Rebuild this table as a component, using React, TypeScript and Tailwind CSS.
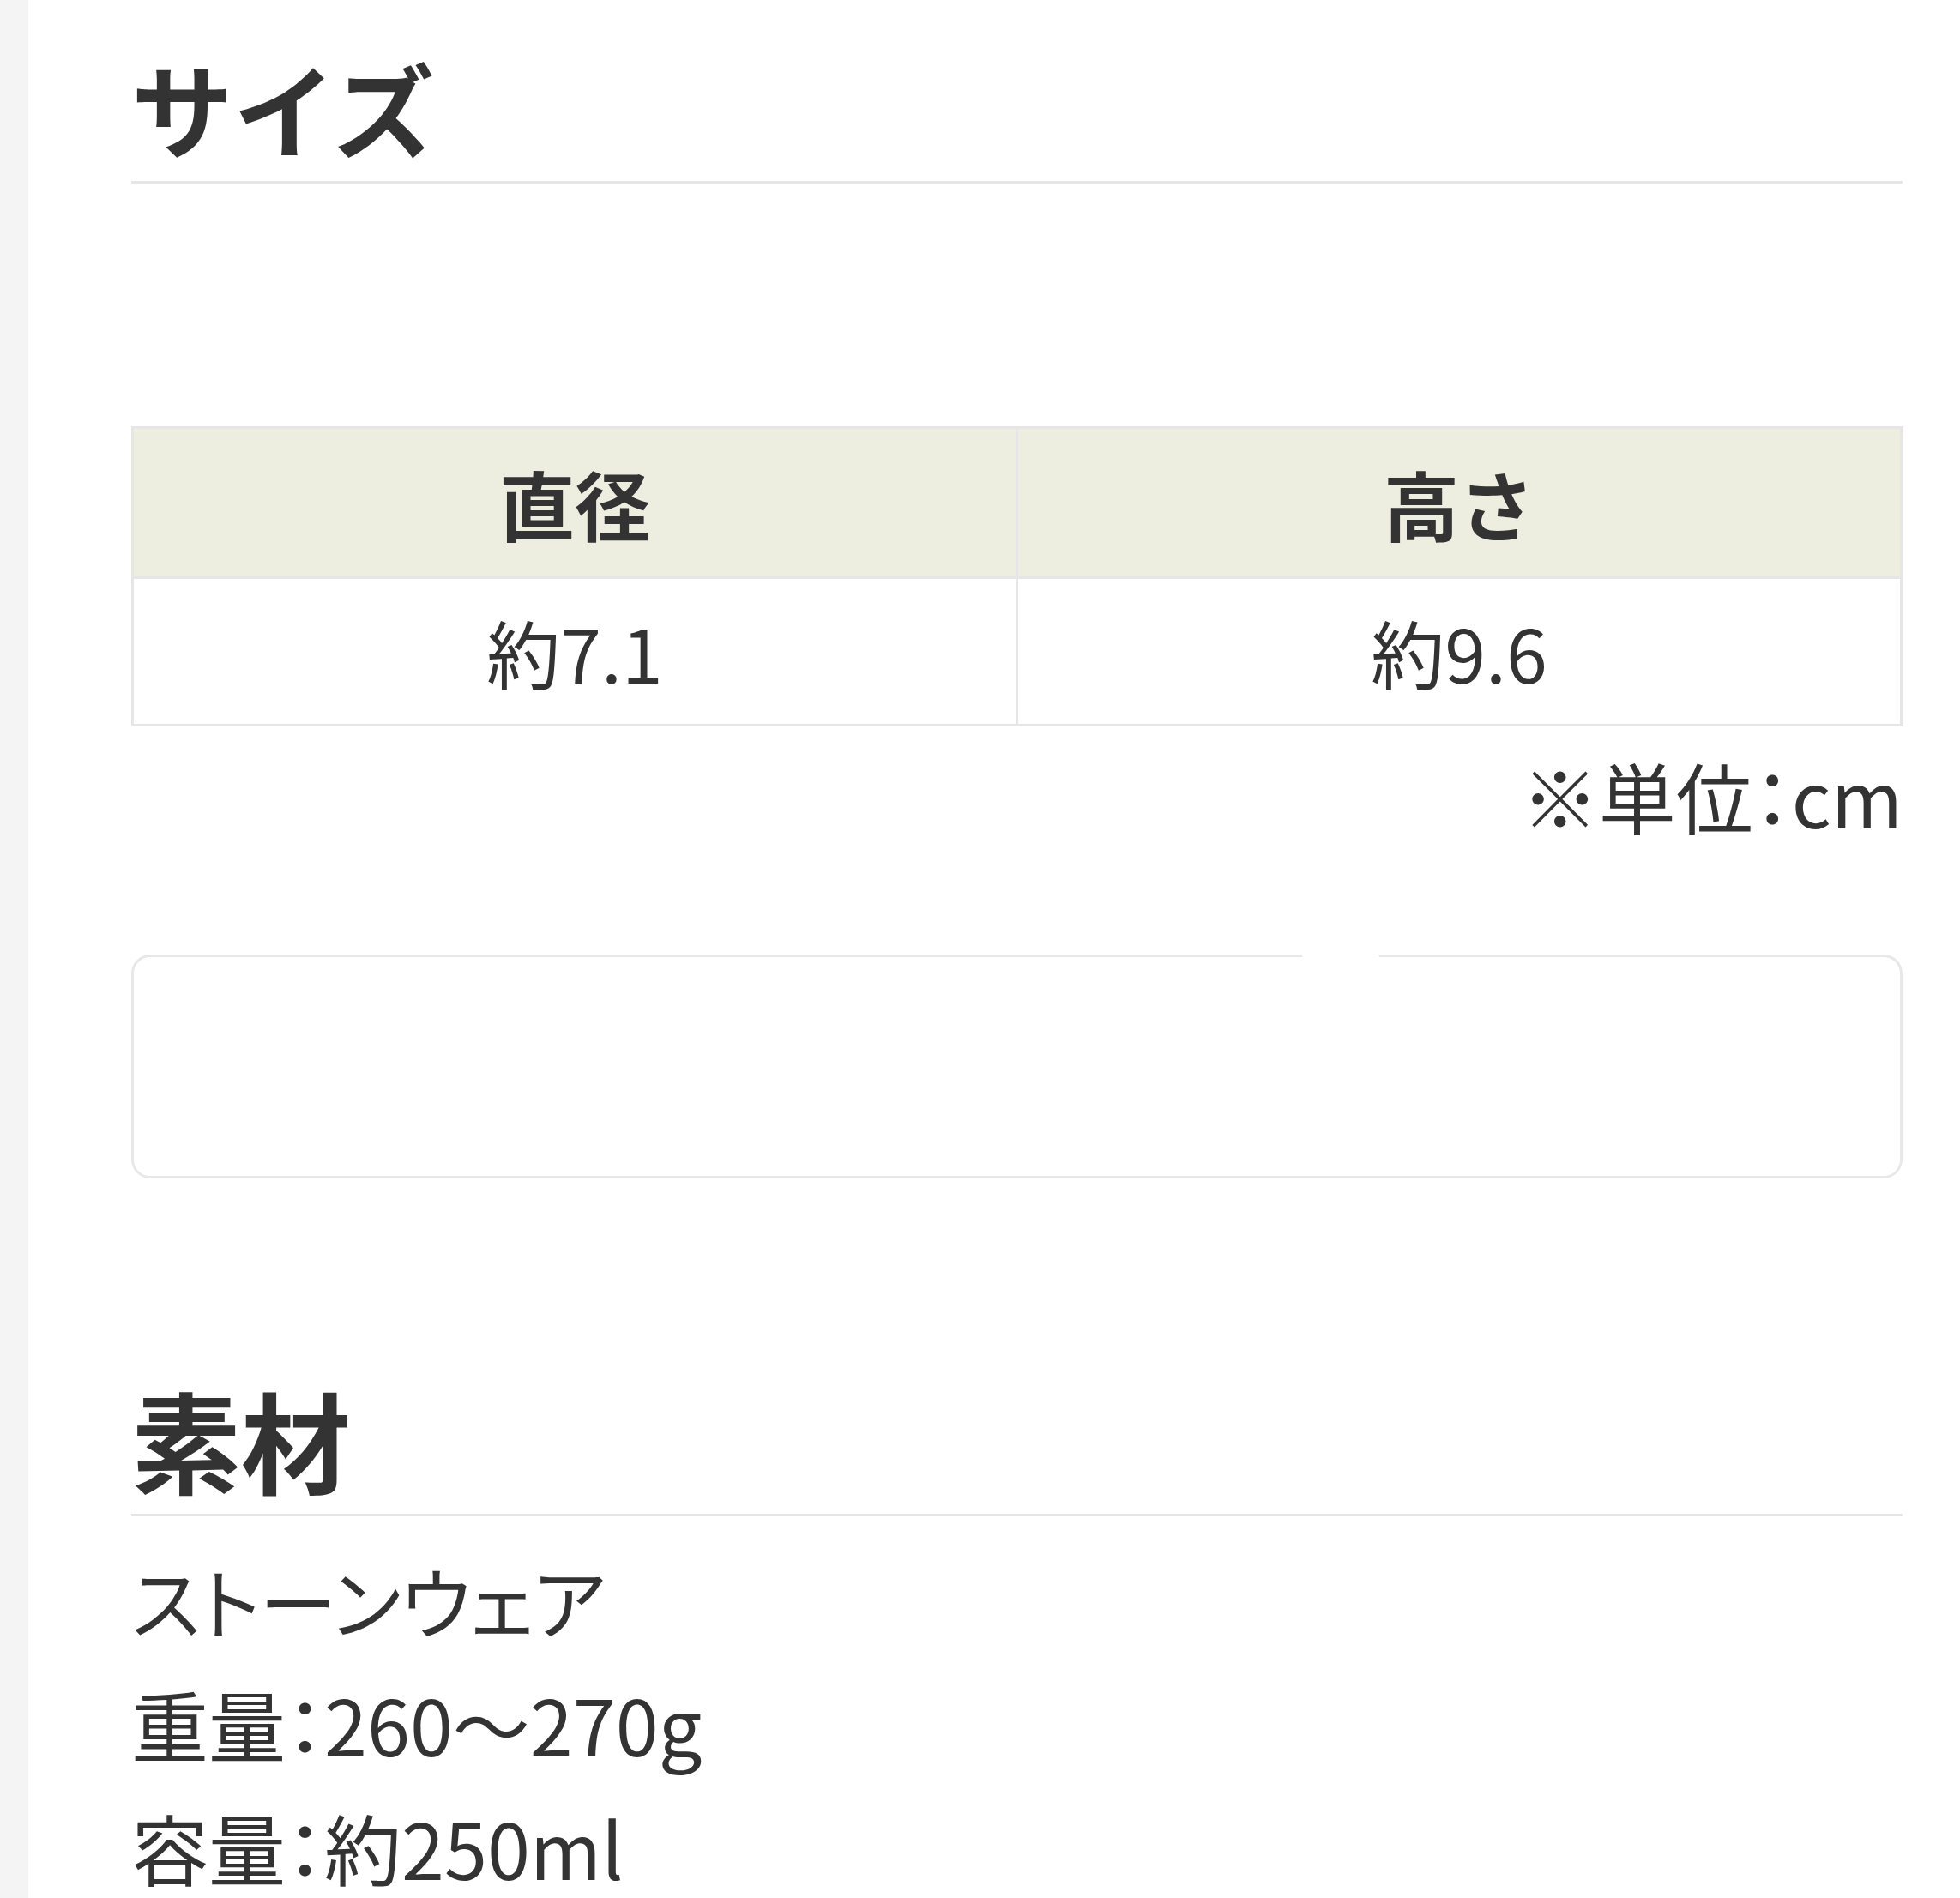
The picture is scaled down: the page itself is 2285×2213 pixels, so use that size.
import React from "react";

export default function App() {
  return (
    <div className="flex min-h-[2213px] w-full bg-white font-['Noto_Sans_CJK_JP','Noto_Sans',sans-serif] text-[#333333]">
      <div className="w-[33px] shrink-0 bg-[#f4f4f4]" />
      <div className="flex-1 pl-[120px] pr-[67px]">
        <h2 className="mt-[37px] border-b-[3px] border-[#e6e6e6] text-[119px] font-bold leading-[174px]">
          サイズ
        </h2>

        <table className="mt-[283px] w-full table-fixed border-collapse border-[3px] border-[#e6e6e6]">
          <thead>
            <tr className="h-[175px] bg-[#eeeee0]">
              <th className="border-[3px] border-[#e6e6e6] text-center text-[88px] font-bold leading-none">直径</th>
              <th className="border-[3px] border-[#e6e6e6] text-center text-[88px] font-bold leading-none">高さ</th>
            </tr>
          </thead>
          <tbody>
            <tr className="h-[172px]">
              <td className="border-[3px] border-[#e6e6e6] text-center text-[86px] leading-none">約7.1</td>
              <td className="border-[3px] border-[#e6e6e6] text-center text-[86px] leading-none">約9.6</td>
            </tr>
          </tbody>
        </table>

        <p className="mt-[20px] text-right text-[90px] leading-[120px] [font-feature-settings:'palt']">※単位：cm</p>

        <div className="relative mt-[126px] h-[261px] rounded-[22px] border-[3px] border-[#e8e8e8]">
          <div className="absolute left-[1362px] top-[-5px] h-[10px] w-[90px] rounded-full bg-white" />
        </div>

        <h2 className="mt-[217px] border-b-[3px] border-[#e6e6e6] text-[128px] font-bold leading-[174px]">
          素材
        </h2>

        <div className="mt-[25px] text-[90px] leading-[144px] [font-feature-settings:'palt']">
          <p>ストーンウェア</p>
          <p>重量：260～270g</p>
          <p>容量：約250ml</p>
        </div>
      </div>
    </div>
  );
}
